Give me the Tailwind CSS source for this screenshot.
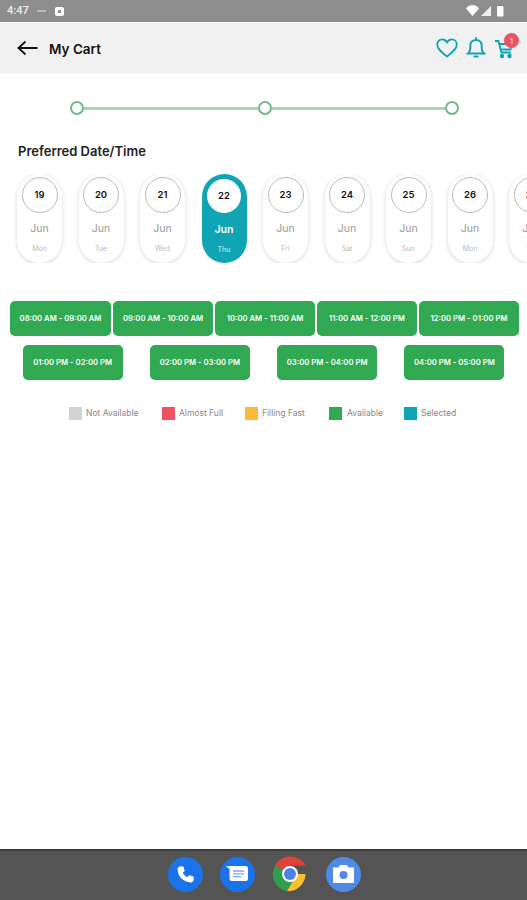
<!DOCTYPE html>
<html lang="en">
<head>
  <meta charset="UTF-8" />
  <meta name="viewport" content="width=device-width, initial-scale=1.0" />
  <title>My Cart</title>
  <script src="https://cdn.jsdelivr.net/npm/@tailwindcss/browser@4"></script>
</head>
<body class="bg-white font-['Inter',sans-serif]">
  <div class="relative w-[527px] h-[900px] overflow-hidden flex flex-col">

    <!-- status bar -->
    <div class="h-[22px] shrink-0 bg-[#8d8d8d] flex items-center pl-[7px] pr-[21px] text-white">
      <span class="text-[11px] font-['Roboto',sans-serif] font-medium text-white/85 w-[24px]">4:47</span>
      <span class="ml-[6px] w-[9px] h-[2px] bg-white/40"></span>
      <span class="ml-[9px] w-[9px] h-[9px] rounded-[2px] bg-white flex items-center justify-center"><span class="w-[3px] h-[3px] bg-[#8d8d8d]"></span></span>
      <svg class="ml-auto" width="40" height="14" viewBox="0 0 40 14">
        <path d="M0 4.500C3-.2 10-.2 13 4.500L6.500 12z" fill="#fff"/>
        <path d="M15 12L25 2v10z" fill="#fff" fill-opacity=".85"/>
        <rect x="31" y="2" width="6.500" height="10.500" rx="1" fill="#fff"/>
      </svg>
    </div>

    <!-- header -->
    <header class="mt-[1px] h-[50px] shrink-0 bg-[#f1f1f1] flex items-center pl-[17px] pr-[11px]">
      <svg width="21" height="16" viewBox="0 0 21 16" fill="none" stroke="#111" stroke-width="1.800"><path d="M20.500 8H1.500M8.500 1.500L1.500 8l7 6.500"/></svg>
      <h1 class="ml-[11px] pt-[2px] text-[13.500px] font-semibold text-[#111]">My Cart</h1>
      <div class="ml-auto flex items-center">
        <svg width="22" height="20" viewBox="0 0 22 20" fill="none" stroke="#10a5b5" stroke-width="1.800"><path d="M11 18.500C6 14.500 1.200 11 1.200 6.500 1.200 3.500 3.500 1.300 6.200 1.300c2 0 3.700 1 4.800 3 1.100-2 2.800-3 4.800-3 2.700 0 5 2.200 5 5.200 0 4.500-4.800 8-9.800 12z"/></svg>
        <svg class="ml-[8px]" width="20" height="22" viewBox="0 0 20 22" fill="none" stroke="#10a5b5" stroke-width="2"><path d="M2 16.500c1.600-1.500 2.300-3 2.300-5.500V8.500C4.300 5.200 6.700 3 10 3s5.700 2.200 5.700 5.500V11c0 2.500.7 4 2.300 5.500z"/><path d="M10 3V1M8.300 19.500h3.400" stroke-linecap="round"/></svg>
        <div class="relative ml-[8px] w-[22px] h-[24px]">
          <svg class="absolute left-0 top-[3px]" width="20" height="20" viewBox="0 0 20 20" fill="none" stroke="#10a5b5" stroke-width="1.800"><path d="M1 2h3.500l2.800 11.500h9.500"/><path d="M5.500 5H18l-1.500 5.500H6.800"/><circle cx="8" cy="17" r="1.300" fill="#10a5b5"/><circle cx="15.500" cy="17" r="1.300" fill="#10a5b5"/></svg>
          <span class="absolute left-[10px] top-[-3px] w-[15px] h-[15px] rounded-full bg-[#ee5064] text-white text-[8px] flex items-center justify-center">1</span>
        </div>
      </div>
    </header>

    <!-- stepper -->
    <div class="mt-[28px] h-[14px] shrink-0 ml-[70px] w-[389px] flex items-center">
      <span class="w-[14px] h-[14px] shrink-0 rounded-full border-2 border-[#6fb98a] bg-white"></span>
      <span class="flex-1 h-[3px] bg-[#a6d6b4]"></span>
      <span class="w-[14px] h-[14px] shrink-0 rounded-full border-2 border-[#6fb98a] bg-white"></span>
      <span class="flex-1 h-[3px] bg-[#a6d6b4]"></span>
      <span class="w-[14px] h-[14px] shrink-0 rounded-full border-2 border-[#6fb98a] bg-white"></span>
    </div>

    <h2 class="mt-[28px] ml-[18px] text-[13px] leading-[16px] font-semibold text-[#222]">Preferred Date/Time</h2>

    <!-- dates -->
    <div class="mt-[15px] pl-[17px] flex gap-[16.500px] overflow-hidden shrink-0">
      <div class="w-[45px] h-[89px] shrink-0 rounded-full bg-white shadow-[0_1px_4px_rgba(0,0,0,0.16)] flex flex-col items-center pt-[3px]">
        <span class="w-[36px] h-[36px] rounded-full border border-[#bbb] flex items-center justify-center text-[9.500px] font-semibold text-[#111]">19</span>
        <span class="mt-[9px] text-[10.500px] leading-[14px] text-[#999]">Jun</span>
        <span class="mt-[8px] text-[7px] leading-[10px] text-[#bbb]">Mon</span>
      </div>
      <div class="w-[45px] h-[89px] shrink-0 rounded-full bg-white shadow-[0_1px_4px_rgba(0,0,0,0.16)] flex flex-col items-center pt-[3px]">
        <span class="w-[36px] h-[36px] rounded-full border border-[#bbb] flex items-center justify-center text-[9.500px] font-semibold text-[#111]">20</span>
        <span class="mt-[9px] text-[10.500px] leading-[14px] text-[#999]">Jun</span>
        <span class="mt-[8px] text-[7px] leading-[10px] text-[#bbb]">Tue</span>
      </div>
      <div class="w-[45px] h-[89px] shrink-0 rounded-full bg-white shadow-[0_1px_4px_rgba(0,0,0,0.16)] flex flex-col items-center pt-[3px]">
        <span class="w-[36px] h-[36px] rounded-full border border-[#bbb] flex items-center justify-center text-[9.500px] font-semibold text-[#111]">21</span>
        <span class="mt-[9px] text-[10.500px] leading-[14px] text-[#999]">Jun</span>
        <span class="mt-[8px] text-[7px] leading-[10px] text-[#bbb]">Wed</span>
      </div>
      <div class="w-[45px] h-[89px] shrink-0 rounded-full bg-[#0fa5b5] flex flex-col items-center pt-[5px]">
        <span class="w-[34px] h-[34px] rounded-full bg-white flex items-center justify-center text-[9.500px] font-semibold text-[#111]">22</span>
        <span class="mt-[10px] text-[10.500px] leading-[14px] font-semibold text-white">Jun</span>
        <span class="mt-[8px] text-[7px] leading-[10px] text-white/80">Thu</span>
      </div>
      <div class="w-[45px] h-[89px] shrink-0 rounded-full bg-white shadow-[0_1px_4px_rgba(0,0,0,0.16)] flex flex-col items-center pt-[3px]">
        <span class="w-[36px] h-[36px] rounded-full border border-[#bbb] flex items-center justify-center text-[9.500px] font-semibold text-[#111]">23</span>
        <span class="mt-[9px] text-[10.500px] leading-[14px] text-[#999]">Jun</span>
        <span class="mt-[8px] text-[7px] leading-[10px] text-[#bbb]">Fri</span>
      </div>
      <div class="w-[45px] h-[89px] shrink-0 rounded-full bg-white shadow-[0_1px_4px_rgba(0,0,0,0.16)] flex flex-col items-center pt-[3px]">
        <span class="w-[36px] h-[36px] rounded-full border border-[#bbb] flex items-center justify-center text-[9.500px] font-semibold text-[#111]">24</span>
        <span class="mt-[9px] text-[10.500px] leading-[14px] text-[#999]">Jun</span>
        <span class="mt-[8px] text-[7px] leading-[10px] text-[#bbb]">Sat</span>
      </div>
      <div class="w-[45px] h-[89px] shrink-0 rounded-full bg-white shadow-[0_1px_4px_rgba(0,0,0,0.16)] flex flex-col items-center pt-[3px]">
        <span class="w-[36px] h-[36px] rounded-full border border-[#bbb] flex items-center justify-center text-[9.500px] font-semibold text-[#111]">25</span>
        <span class="mt-[9px] text-[10.500px] leading-[14px] text-[#999]">Jun</span>
        <span class="mt-[8px] text-[7px] leading-[10px] text-[#bbb]">Sun</span>
      </div>
      <div class="w-[45px] h-[89px] shrink-0 rounded-full bg-white shadow-[0_1px_4px_rgba(0,0,0,0.16)] flex flex-col items-center pt-[3px]">
        <span class="w-[36px] h-[36px] rounded-full border border-[#bbb] flex items-center justify-center text-[9.500px] font-semibold text-[#111]">26</span>
        <span class="mt-[9px] text-[10.500px] leading-[14px] text-[#999]">Jun</span>
        <span class="mt-[8px] text-[7px] leading-[10px] text-[#bbb]">Mon</span>
      </div>
      <div class="w-[45px] h-[89px] shrink-0 rounded-full bg-white shadow-[0_1px_4px_rgba(0,0,0,0.16)] flex flex-col items-center pt-[3px]">
        <span class="w-[36px] h-[36px] rounded-full border border-[#bbb] flex items-center justify-center text-[9.500px] font-semibold text-[#111]">27</span>
        <span class="mt-[9px] text-[10.500px] leading-[14px] text-[#999]">Jun</span>
        <span class="mt-[8px] text-[7px] leading-[10px] text-[#bbb]">Tue</span>
      </div>
    </div>

    <!-- time slots -->
    <div class="mt-[38px] pl-[10px] pr-[8px] flex justify-between shrink-0">
      <button class="w-[101px] h-[35px] rounded-[5px] bg-[#31a952] text-white text-[7.700px] font-semibold">08:00 AM - 09:00 AM</button>
      <button class="w-[100px] h-[35px] rounded-[5px] bg-[#31a952] text-white text-[7.700px] font-semibold">09:00 AM - 10:00 AM</button>
      <button class="w-[100px] h-[35px] rounded-[5px] bg-[#31a952] text-white text-[7.700px] font-semibold">10:00 AM - 11:00 AM</button>
      <button class="w-[100px] h-[35px] rounded-[5px] bg-[#31a952] text-white text-[7.700px] font-semibold">11:00 AM - 12:00 PM</button>
      <button class="w-[100px] h-[35px] rounded-[5px] bg-[#31a952] text-white text-[7.700px] font-semibold">12:00 PM - 01:00 PM</button>
    </div>
    <div class="mt-[9px] px-[9px] flex justify-around shrink-0">
      <button class="w-[100px] h-[35px] rounded-[5px] bg-[#31a952] text-white text-[7.700px] font-semibold">01:00 PM - 02:00 PM</button>
      <button class="w-[100px] h-[35px] rounded-[5px] bg-[#31a952] text-white text-[7.700px] font-semibold">02:00 PM - 03:00 PM</button>
      <button class="w-[100px] h-[35px] rounded-[5px] bg-[#31a952] text-white text-[7.700px] font-semibold">03:00 PM - 04:00 PM</button>
      <button class="w-[100px] h-[35px] rounded-[5px] bg-[#31a952] text-white text-[7.700px] font-semibold">04:00 PM - 05:00 PM</button>
    </div>

    <!-- legend -->
    <div class="mt-[27px] pl-[69px] flex items-center text-[8.500px] text-[#888] shrink-0">
      <span class="w-[13px] h-[13px] bg-[#d2d2d2]"></span><span class="ml-[4px] w-[76px]">Not Available</span>
      <span class="w-[13px] h-[13px] bg-[#ee5064]"></span><span class="ml-[4px] w-[66px]">Almost Full</span>
      <span class="w-[13px] h-[13px] bg-[#fdb840]"></span><span class="ml-[4px] w-[67px]">Filling Fast</span>
      <span class="w-[13px] h-[13px] bg-[#31a952]"></span><span class="ml-[5px] w-[57px]">Available</span>
      <span class="w-[13px] h-[13px] bg-[#0fa5b5]"></span><span class="ml-[4px]">Selected</span>
    </div>

    <!-- nav bar -->
    <div class="mt-auto h-[51px] shrink-0 bg-[#545454] border-t-[2px] border-[#3a3a3a] flex items-center pb-[3px] pl-[168px] gap-[17px]">
      <span class="w-[35px] h-[35px] rounded-full bg-[#1a73e8] flex items-center justify-center">
        <svg width="21" height="21" viewBox="0 0 24 24" fill="#fff"><path d="M6.600 2.500l3 .4 1.500 5-2.200 2.200c1 2.300 2.700 4 5 5l2.200-2.200 5 1.500.4 3c.1 1.800-1.500 3.600-3.300 3.600C9.500 21 3 14.500 3 5.800 3 4 4.800 2.400 6.600 2.500z"/></svg>
      </span>
      <span class="w-[35px] h-[35px] rounded-full bg-[#1a73e8] flex items-center justify-center">
        <svg width="23" height="19" viewBox="0 0 23 19"><path d="M0 1h19.500a2.500 2.500 0 0 1 2.500 2.500v10a2.500 2.500 0 0 1-2.500 2.500H6a2.500 2.500 0 0 1-2.500-2.500V4z" fill="#fff"/><path d="M7 6h11M7 8.800h11M7 11.600h8" stroke="#7baaf0" stroke-width="1.300"/></svg>
      </span>
      <svg width="36" height="36" viewBox="0 0 36 36">
        <path d="M18 18L3 9.500A17.500 17.500 0 0 1 33.500 9.500H18z" fill="#db4437"/>
        <path d="M18 18L3 9.500A17.500 17.500 0 0 0 15 35.300l7-12z" fill="#2f9e4f"/>
        <path d="M18 18h15.500A17.500 17.500 0 0 1 15 35.300L22 23.300z" fill="#fbc02d"/>
        <circle cx="18" cy="18" r="8" fill="#fff"/>
        <circle cx="18" cy="18" r="6" fill="#4a80e8"/>
      </svg>
      <span class="ml-[1px] w-[35px] h-[35px] rounded-full bg-[#4f8ae6] flex items-center justify-center">
        <svg width="23" height="20" viewBox="0 0 23 20"><path d="M1 3.500h5.500L8 1h7l1.500 2.500H22V19H1z" fill="#fff"/><circle cx="11.500" cy="11" r="4" fill="#4f8ae6"/></svg>
      </span>
    </div>
  </div>
</body>
</html>
